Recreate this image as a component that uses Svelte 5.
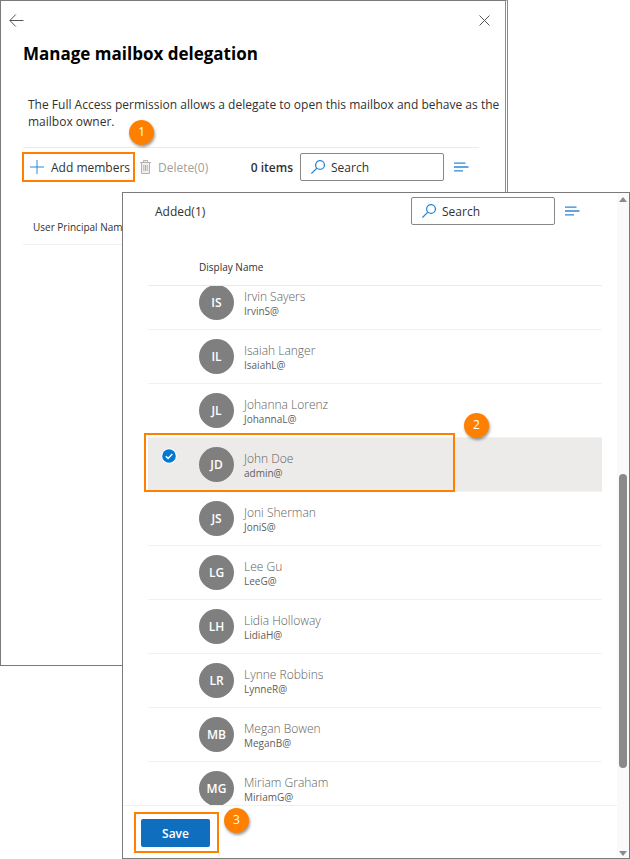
<script lang="ts">
  import { onMount } from 'svelte';

  let scroller: HTMLDivElement;

  let members = $state([
    { initials: 'IS', name: 'Irvin Sayers', alias: 'IrvinS@', selected: false },
    { initials: 'IL', name: 'Isaiah Langer', alias: 'IsaiahL@', selected: false },
    { initials: 'JL', name: 'Johanna Lorenz', alias: 'JohannaL@', selected: false },
    { initials: 'JD', name: 'John Doe', alias: 'admin@', selected: true },
    { initials: 'JS', name: 'Joni Sherman', alias: 'JoniS@', selected: false },
    { initials: 'LG', name: 'Lee Gu', alias: 'LeeG@', selected: false },
    { initials: 'LH', name: 'Lidia Holloway', alias: 'LidiaH@', selected: false },
    { initials: 'LR', name: 'Lynne Robbins', alias: 'LynneR@', selected: false },
    { initials: 'MB', name: 'Megan Bowen', alias: 'MeganB@', selected: false },
    { initials: 'MG', name: 'Miriam Graham', alias: 'MiriamG@', selected: false },
  ]);

  let added = $derived(members.filter((m) => m.selected).length);

  onMount(() => {
    scroller.scrollTop = 10;
  });
</script>

{#snippet searchBox(label: string)}
  <label class="search">
    <svg width="14" height="14" viewBox="0 0 14 14" aria-hidden="true">
      <circle cx="9" cy="5" r="4.4" />
      <path d="M5.9 8.1 .4 13.6" />
    </svg>
    <input type="search" placeholder="Search" aria-label={label} />
  </label>
  <button class="filter" aria-label="Filter">
    <svg width="15" height="10" viewBox="0 0 15 10" aria-hidden="true">
      <path d="M0 1.2h11.5M0 5h14.5M0 8.8h9" />
    </svg>
  </button>
{/snippet}

<main class="stage">
  <section class="panel back-panel">
    <div class="nav-row">
      <button aria-label="Back">
        <svg width="15" height="13" viewBox="0 0 15 13" aria-hidden="true">
          <path d="M14.5 6.5H1M6.8.5.8 6.5l6 6" />
        </svg>
      </button>
      <button aria-label="Close">
        <svg width="11" height="11" viewBox="0 0 11 11" aria-hidden="true">
          <path d="m.5.5 10 10M10.5.5l-10 10" />
        </svg>
      </button>
    </div>

    <h1>Manage mailbox delegation</h1>
    <p class="intro">
      The Full Access permission allows a delegate to open this mailbox and behave as the mailbox owner.
    </p>

    <div class="toolbar">
      <div class="marked add-mark">
        <button class="command">
          <svg class="plus" width="14" height="14" viewBox="0 0 14 14" aria-hidden="true">
            <path d="M7 0v14M0 7h14" />
          </svg>
          Add members
        </button>
        <span class="badge badge-one">1</span>
      </div>
      <button class="command" disabled>
        <svg class="trash" width="11" height="14" viewBox="0 0 11 14" aria-hidden="true">
          <path d="M0 2.5h11M3.5 2.5v-2h4v2M1.5 2.5v11h8v-11M3.8 5v6M5.5 5v6M7.2 5v6" />
        </svg>
        Delete(0)
      </button>
      <strong class="count">0 items</strong>
      {@render searchBox('Search delegates')}
    </div>

    <table class="delegates">
      <thead>
        <tr><th scope="col">User Principal Name</th></tr>
      </thead>
    </table>
  </section>

  <section class="panel front-panel">
    <div class="front-body">
      <div class="front-toolbar">
        <span class="added">Added({added})</span>
        {@render searchBox('Search members')}
      </div>

      <div class="scroller" bind:this={scroller}>
        <table class="members">
          <thead>
            <tr>
              <td class="check-cell"></td>
              <th scope="col">Display Name</th>
            </tr>
          </thead>
          <tbody>
            {#each members as member}
              <tr class:selected={member.selected}>
                <td class="check-cell">
                  <label class="check">
                    <input type="checkbox" bind:checked={member.selected} aria-label={member.name} />
                    <svg width="14" height="14" viewBox="0 0 14 14" aria-hidden="true">
                      <circle class="ring" cx="7" cy="7" r="7.8" />
                      <circle cx="7" cy="7" r="6.8" />
                      <path d="m3.8 7.2 2.3 2.2 4.2-4.4" />
                    </svg>
                  </label>
                  {#if member.initials === 'JD'}
                    <span class="row-mark"></span>
                    <span class="badge badge-two">2</span>
                  {/if}
                </td>
                <td>
                  <div class="person">
                    <span class="avatar">{member.initials}</span>
                    <div class="person-text">
                      <div class="name">{member.name}</div>
                      <div class="alias">{member.alias}</div>
                    </div>
                  </div>
                </td>
              </tr>
            {/each}
          </tbody>
        </table>
      </div>

      <footer>
        <div class="marked save-mark">
          <button class="save">Save</button>
          <span class="badge badge-three">3</span>
        </div>
      </footer>
    </div>

    <div class="scrollbar" aria-hidden="true">
      <svg width="8" height="5" viewBox="0 0 8 5"><path d="M0 5 4 0l4 5z" /></svg>
      <div class="track"><div class="thumb"></div></div>
      <svg width="8" height="5" viewBox="0 0 8 5"><path d="M0 0h8L4 5z" /></svg>
    </div>
  </section>
</main>

<style>
  :global(body) {
    margin: 0;
    background: #fff;
  }

  .stage {
    display: grid;
    font-family: 'Open Sans', 'Noto Sans', sans-serif;
    font-size: 12px;
    color: #323130;
  }

  button,
  input {
    font: inherit;
    color: inherit;
  }

  button {
    display: flex;
    align-items: center;
    padding: 0;
    border: none;
    background: none;
    cursor: pointer;
  }

  svg {
    display: block;
    flex: none;
    fill: none;
    stroke: #555;
  }

  .panel {
    grid-area: 1 / 1;
    box-sizing: border-box;
    min-width: 0;
    border: 1px solid #7a7a7a;
    background: #fff;
  }

  .back-panel {
    margin: 0 122px 193px 0;
    padding: 0 26px 0 22px;
    border-right: 3px double #8a8a8a;
  }

  .front-panel {
    position: relative;
    display: flex;
    height: calc(100vh - 192px);
    min-height: 400px;
    margin: 192px 0 0 122px;
  }

  .nav-row {
    display: flex;
    justify-content: space-between;
    align-items: center;
    height: 39px;
    margin: 0 -11px 0 -14px;
  }

  h1 {
    margin: 0;
    font-size: 17px;
    line-height: 28px;
    font-weight: 700;
    color: #000;
  }

  .intro {
    margin: 28px -24px 17px 0;
    padding-left: 5px;
    line-height: 17px;
  }

  .toolbar {
    display: flex;
    align-items: center;
    height: 30px;
    padding-top: 4px;
    border-top: 1px solid #eaeaea;
  }

  .marked {
    position: relative;
    border: 2px solid #ff8000;
  }

  .add-mark {
    margin: 0 5px 0 -1px;
    padding: 0 3px 0 6px;
  }

  .command {
    gap: 7px;
    height: 26px;
    white-space: nowrap;
  }

  .command:disabled {
    color: #a19f9d;
  }

  .plus {
    stroke: #2b88d8;
  }

  .trash {
    fill: #f0efee;
    stroke: #b5b3b1;
  }

  .count {
    margin: 0 7px 0 auto;
    font-weight: 600;
    white-space: nowrap;
  }

  .search {
    display: flex;
    align-items: center;
    gap: 6px;
    box-sizing: border-box;
    width: 144px;
    height: 28px;
    padding: 0 8px 0 10px;
    border: 1px solid #8a8886;
    border-radius: 2px;
  }

  .search svg,
  .filter svg {
    stroke: #2b88d8;
    stroke-width: 1.3;
  }

  .search input {
    flex: 1;
    min-width: 0;
    padding: 0;
    border: none;
    outline: none;
    background: none;
  }

  .search input::placeholder {
    color: #323130;
    opacity: 1;
  }

  .filter {
    margin: 0 10px;
  }

  .delegates {
    width: 100%;
    margin-top: 26px;
    border-collapse: collapse;
  }

  .delegates th {
    height: 34px;
    padding: 2px 10px 0;
    border-bottom: 1px solid #f0f0f0;
    font-size: 10px;
    font-weight: 400;
    text-align: left;
  }

  .front-body {
    flex: 1;
    display: flex;
    flex-direction: column;
    min-width: 0;
  }

  .front-toolbar {
    display: flex;
    align-items: center;
    padding: 4px 27px 0 32px;
  }

  .added {
    margin-right: auto;
  }

  .scroller {
    flex: 1;
    min-height: 0;
    margin-top: 20px;
    padding: 0 15px 0 25px;
    overflow: hidden;
  }

  .members {
    width: 100%;
    border-collapse: separate;
    border-spacing: 0;
  }

  .members td,
  .members th {
    height: 53px;
    padding: 0;
    border-bottom: 1px solid #f3f2f1;
    text-align: left;
  }

  .members thead td,
  .members thead th {
    position: sticky;
    top: 0;
    z-index: 1;
    height: 36px;
    padding-top: 4px;
    border-bottom-color: #eaeaea;
    background: #fff;
    font-size: 10px;
    font-weight: 400;
  }

  .members .check-cell {
    width: 51px;
  }

  .members tbody tr {
    position: relative;
  }

  .selected td {
    background: #edebe9;
  }

  .check {
    display: block;
    width: 14px;
    margin: 0 0 18px 14px;
    cursor: pointer;
  }

  .check input {
    position: absolute;
    width: 14px;
    height: 14px;
    margin: 0;
    opacity: 0;
  }

  .check svg {
    visibility: hidden;
    overflow: visible;
  }

  .check input:checked + svg {
    visibility: visible;
  }

  .check circle {
    fill: #0078d4;
    stroke: none;
  }

  .check .ring {
    fill: #fff;
  }

  .check path {
    stroke: #fff;
    stroke-width: 1.5;
  }

  .person {
    display: flex;
    align-items: center;
    gap: 10px;
  }

  .person-text {
    padding-top: 2px;
  }

  .avatar {
    display: flex;
    align-items: center;
    justify-content: center;
    width: 35px;
    height: 35px;
    border-radius: 50%;
    background: #7f7f7f;
    color: #fff;
    font-weight: 600;
  }

  .name {
    font-weight: 300;
    line-height: 15px;
    color: #605e5c;
  }

  .alias {
    font-size: 10px;
    line-height: 15px;
    color: #605e5c;
  }

  .row-mark {
    position: absolute;
    inset: -5px 147px 0 -4px;
    border: 2px solid #ff8000;
    pointer-events: none;
  }

  .badge {
    position: absolute;
    width: 25px;
    height: 25px;
    border-radius: 50%;
    background: #ff8000;
    box-shadow: 1px 2px 3px rgba(0, 0, 0, 0.4);
    color: #fff;
    font-size: 12px;
    line-height: 24px;
    text-align: center;
  }

  .badge-one {
    top: -34px;
    right: -21px;
  }

  .badge-two {
    top: -25px;
    right: 113px;
  }

  .badge-three {
    top: -6px;
    right: -32px;
  }

  footer {
    display: flex;
    padding: 6px 11px 5px;
    border-top: 1px solid #f0f0f0;
  }

  .save-mark {
    padding: 5px 7px 4px 5px;
  }

  .save {
    justify-content: center;
    width: 69px;
    height: 28px;
    border-radius: 2px;
    background: #106ebe;
    color: #fff;
    font-weight: 600;
  }

  .scrollbar {
    display: flex;
    flex-direction: column;
    align-items: center;
    width: 12px;
    padding: 4px 0 2px;
    background: #fafafa;
  }

  .scrollbar svg {
    fill: #8a8a8a;
    stroke: none;
  }

  .track {
    flex: 1;
    display: flex;
    flex-direction: column;
    justify-content: flex-end;
    box-sizing: border-box;
    padding-bottom: 83px;
  }

  .thumb {
    width: 8px;
    height: 52%;
    border-radius: 4px;
    background: #8a8a8a;
  }
</style>
